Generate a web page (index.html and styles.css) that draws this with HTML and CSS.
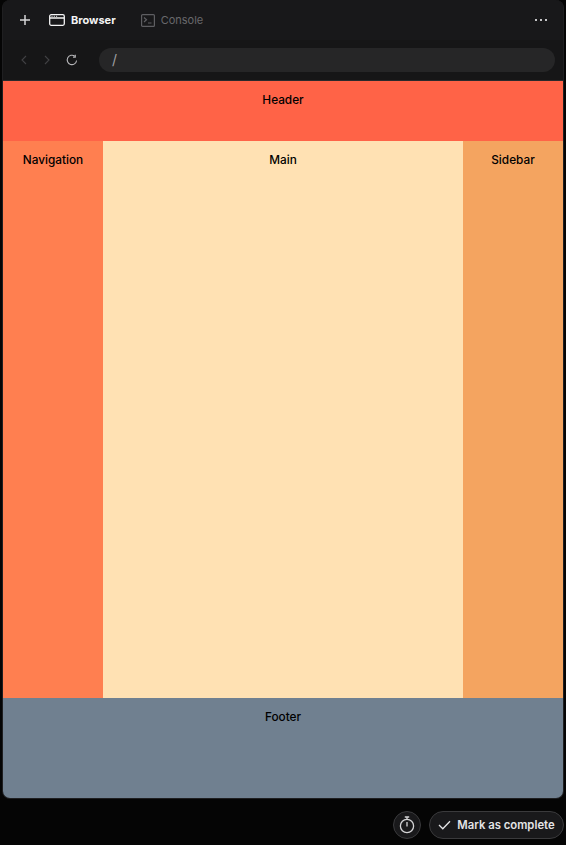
FILE: index.html
```html
<!DOCTYPE html>
<html>
	<head>
		<meta charset="UTF-8">
		<title>Browser</title>
		<link rel="stylesheet" href="styles.css">
	</head>
	<body>
		<div class="window">
			<div class="tabs">
				<svg class="plus" width="12" height="12" viewBox="0 0 12 12"><path d="M6 1v10M1 6h10" stroke="#d6d6d8" stroke-width="1.5" fill="none"/></svg>
				<div class="tab active">
					<svg width="16" height="12" viewBox="0 0 16 12" fill="none" stroke="#f4f4f5" stroke-width="1.3"><rect x=".7" y=".7" width="14.6" height="10.6" rx="1.5"/><path d="M1 4h14"/><path d="M2.5 2.3h1M4.8 2.3h1M7.1 2.3h1" stroke-width="1"/></svg>
					<span>Browser</span>
				</div>
				<div class="tab">
					<svg width="14" height="13" viewBox="0 0 14 13" fill="none" stroke="#5e5e62" stroke-width="1.2"><rect x=".6" y=".6" width="12.8" height="11.8" rx="1"/><path d="M3 3.5l2.5 2.3L3 8M7 9h3.5"/></svg>
					<span>Console</span>
				</div>
				<div class="more"><i></i><i></i><i></i></div>
			</div>
			<div class="addressbar">
				<div class="navs">
					<svg width="6" height="10" viewBox="0 0 6 10" fill="none" stroke="#404043" stroke-width="1.1"><path d="M5 1L1 5l4 4"/></svg>
					<svg width="6" height="10" viewBox="0 0 6 10" fill="none" stroke="#404043" stroke-width="1.1"><path d="M1 1l4 4-4 4"/></svg>
					<svg width="12" height="12" viewBox="0 0 12 12" fill="none" stroke="#b4b4b7" stroke-width="1.1"><path d="M10.6 6.5A4.7 4.7 0 1 1 8.8 2.2"/><path d="M9.3.8v2.3H7"/></svg>
				</div>
				<div class="url">/</div>
			</div>
			<div class="demo">
				<header class="header">Header</header>
				<nav class="navigation">Navigation</nav>
				<main class="main">Main</main>
				<aside class="sidebar">Sidebar</aside>
				<footer class="footer">Footer</footer>
			</div>
		</div>
		<div class="actions">
			<button class="timer">
				<svg width="16" height="18" viewBox="0 0 16 18" fill="none" stroke="#d4d4d6" stroke-width="1.3"><circle cx="8" cy="10" r="6.6"/><path d="M8 6v4.5M5.8 1h4.4M8 1v2.5"/></svg>
			</button>
			<button class="complete">
				<svg width="13" height="10" viewBox="0 0 13 10" fill="none" stroke="#e4e4e6" stroke-width="1.3"><path d="M1 5l3.8 3.8L12 1.2"/></svg>
				Mark as complete
			</button>
		</div>
	</body>
</html>
```

FILE: styles.css
```css
*{
	box-sizing: border-box;
}
body{
	margin: 0;
	height: 845px;
	overflow: hidden;
	background: #050505;
	font-family: Inter, "Liberation Sans", Arial, sans-serif;
}
.window{
	width: 562px;
	height: 799px;
	margin-left: 2px;
	border: 1px solid #1f1f21;
	border-top: 0;
	border-radius: 8px;
	overflow: hidden;
	display: flex;
	flex-direction: column;
	background: #161617;
}
.tabs{
	height: 40px;
	display: flex;
	align-items: center;
	padding-left: 16px;
	background: #18181a;
}
.plus{
	margin-right: 18px;
}
.tab{
	display: flex;
	align-items: center;
	gap: 6px;
	margin-right: 25px;
	font-size: 11px;
	color: #68686c;
}
.tab.active{
	color: #f4f4f5;
	font-weight: 700;
}
.more{
	margin-left: auto;
	margin-right: 16px;
	display: flex;
	gap: 3px;
}
.more i{
	width: 2px;
	height: 2px;
	background: #c4c4c6;
}
.addressbar{
	height: 41px;
	display: flex;
	align-items: center;
	padding: 0 8px 1px 18px;
	border-bottom: 1px solid #2a2a2c;
}
.navs{
	display: flex;
	align-items: center;
	gap: 16.5px;
	width: 78px;
}
.url{
	flex: 1;
	height: 24px;
	border-radius: 12px;
	background: #262627;
	padding-left: 13px;
	color: #a0a0a3;
	font-size: 14px;
	line-height: 24px;
}
.demo{
	flex: 1;
	display: grid;
	grid-template-columns: 100px 1fr 100px;
	grid-template-rows: 60px 1fr 100px;
	font-size: 11.8px;
	font-weight: 500;
	color: #000;
	text-align: center;
}
.demo > *{
	padding-top: 12px;
}
.header{
	grid-column: 1 / 4;
	background: #ff6347;
}
.navigation{
	background: #ff7f50;
}
.main{
	background: #ffe1b3;
}
.sidebar{
	background: #f4a460;
}
.footer{
	grid-column: 1 / 4;
	background: #708090;
}
.actions{
	display: flex;
	justify-content: flex-end;
	align-items: center;
	gap: 8px;
	height: 28px;
	margin-top: 12px;
	padding-right: 2px;
}
.actions button{
	height: 28px;
	display: flex;
	align-items: center;
	justify-content: center;
	background: #19191b;
	border: 1px solid #3a3a3c;
	border-radius: 14px;
	color: #e4e4e6;
	font-family: inherit;
	font-size: 11.3px;
	font-weight: 600;
	padding: 0;
}
.timer{
	width: 28px;
}
.complete{
	width: 135px;
	gap: 6px;
	padding-left: 2px;
}
```
